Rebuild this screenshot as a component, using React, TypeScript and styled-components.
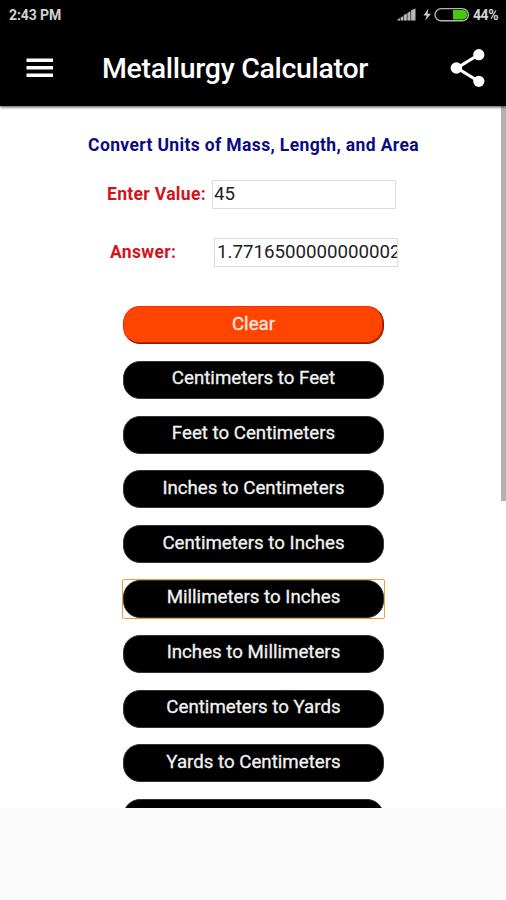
import React from 'react';
import styled, { createGlobalStyle, css } from 'styled-components';

const GlobalStyle = createGlobalStyle`
  * { box-sizing: border-box; }
  body { margin: 0; background: #fafafa; font-family: Roboto, "Liberation Sans", sans-serif; }
`;

const Screen = styled.div`
  width: 506px;
  height: 900px;
  display: flex;
  flex-direction: column;
  overflow: hidden;
  background: #fafafa;
`;

const Header = styled.header`
  height: 106px;
  flex: none;
  background: #000;
  color: #fff;
  box-shadow: 0 1px 3px rgba(0, 0, 0, 0.75);
  z-index: 1;
`;

const StatusBar = styled.div`
  height: 30px;
  padding: 0 8px 0 9px;
  display: flex;
  align-items: center;
  color: #d2d2d2;
  font-size: 14px;
  font-weight: 700;
`;

const Clock = styled.span`
  flex: 1;
  letter-spacing: -0.1px;
`;

const Percent = styled.span`
  font-size: 14px;
  letter-spacing: -0.5px;
`;

const StatusIcons = styled.svg`
  display: block;
  margin-right: 3px;
`;

const AppBar = styled.div`
  height: 76px;
  display: flex;
  align-items: center;
  padding: 0 20px 0 26px;
`;

const MenuIcon = styled.svg`
  display: block;
  flex: none;
  margin-right: 49px;
`;

const ShareIcon = styled.svg`
  display: block;
  flex: none;
`;

const Title = styled.h1`
  margin: 2px 0 0;
  flex: 1;
  font-size: 28.5px;
  font-weight: 500;
  line-height: 34px;
  letter-spacing: -0.3px;
  white-space: nowrap;
`;

const Content = styled.main`
  height: 702px;
  flex: none;
  display: flex;
  background: #fff;
  overflow: hidden;
`;

const Page = styled.div`
  flex: 1;
  display: flex;
  flex-direction: column;
  align-items: center;
  padding-left: 6px;
  min-width: 0;
`;

const ScrollThumb = styled.div`
  width: 5px;
  height: 395px;
  flex: none;
  background: #b2b2b2;
`;

const Heading = styled.h2`
  margin: 28px 0 0;
  font-size: 17.5px;
  line-height: 22px;
  font-weight: 700;
  letter-spacing: 0.36px;
  color: #0a0a82;
  white-space: nowrap;
`;

const Fields = styled.div`
  margin-top: 23px;
  width: 293px;
  display: flex;
  flex-direction: column;
  gap: 28px;
`;

const Field = styled.label<{ $inset: number }>`
  height: 30px;
  display: flex;
  align-items: center;
  padding-left: ${(p) => p.$inset}px;
`;

const FieldName = styled.span<{ $width: number }>`
  width: ${(p) => p.$width}px;
  flex: none;
  font-size: 17.5px;
  line-height: 22px;
  font-weight: 700;
  letter-spacing: 0.33px;
  color: #d3131b;
  white-space: nowrap;
`;

const Value = styled.input<{ $pad: number }>`
  width: 184px;
  height: 29px;
  flex: none;
  margin: 0;
  padding: 0 0 1px ${(p) => p.$pad}px;
  border: 1px solid #dcdcdc;
  border-radius: 0;
  outline: none;
  background: #fff;
  color: #222;
  font: 400 18.7px Roboto, "Liberation Sans", sans-serif;
`;

const Buttons = styled.div`
  margin-top: 39px;
  display: flex;
  flex-direction: column;
  gap: 16.8px;
`;

const Button = styled.button<{ $kind?: 'clear' }>`
  display: block;
  width: 261px;
  height: 38px;
  flex: none;
  margin: 0;
  padding: 0 0 3px;
  border: 1px solid #333;
  border-radius: 17px;
  background: #000;
  color: #f2f2f2;
  font: 400 18.7px/24px Roboto, "Liberation Sans", sans-serif;
  -webkit-text-stroke: 0.3px currentColor;
  white-space: nowrap;
  ${(p) =>
    p.$kind === 'clear' &&
    css`
      background: #ff4500;
      border-color: #f02d05 #9c1608 #9c1608 #f02d05;
      box-shadow: inset -1px -1px 0 #b92a04;
      color: #ffe6e0;
    `}
`;

const FocusRing = styled.div`
  width: 261px;
  height: 38px;
  border-radius: 1px;
  outline: 1.5px solid #e9a13b;
`;

const conversions = [
  'Centimeters to Feet',
  'Feet to Centimeters',
  'Inches to Centimeters',
  'Centimeters to Inches',
  'Millimeters to Inches',
  'Inches to Millimeters',
  'Centimeters to Yards',
  'Yards to Centimeters',
  '',
];

const focused = 'Millimeters to Inches';

export default function App() {
  return (
    <Screen>
      <GlobalStyle />
      <Header>
        <StatusBar>
          <Clock>2:43 PM</Clock>
          <StatusIcons width="73" height="16" viewBox="0 0 73 16">
            <path
              d="M0.5 13.5V12.5L3 11V13.5ZM3.6 13.5V10.5L6.3 9V13.5ZM6.9 13.5V8L9.8 6.5V13.5ZM10.4 13.5V6L13.5 4.2V13.5ZM14.1 13.5V3.2L18.5 1.5V13.5Z"
              fill="#b8b8b8"
            />
            <path d="M31.5 1.5L26.5 8.6H29.8L28 13.8L34 6.7H30.5Z" fill="#d0d0d0" />
            <rect x="38" y="1.6" width="33.4" height="12.2" rx="6.1" fill="#000" stroke="#b5b5b5" strokeWidth="1.4" />
            <path d="M56 3H65.5A4.7 4.7 0 0 1 65.5 12.4H56Z" fill="#45c90b" />
          </StatusIcons>
          <Percent>44%</Percent>
        </StatusBar>
        <AppBar>
          <MenuIcon width="27" height="20" viewBox="0 0 27 20">
            <path d="M0.5 0.5H27V4H0.5ZM0.5 8H27V11.5H0.5ZM0.5 15.5H27V19H0.5Z" fill="#fff" />
          </MenuIcon>
          <Title>Metallurgy Calculator</Title>
          <ShareIcon width="36" height="40" viewBox="0 0 36 40">
            <path d="M29 6.5L7 20L29 33.5" fill="none" stroke="#fff" strokeWidth="3.2" />
            <circle cx="28.8" cy="6.7" r="5.6" fill="#fff" />
            <circle cx="6.4" cy="20" r="5.8" fill="#fff" />
            <circle cx="28.8" cy="33.3" r="5.6" fill="#fff" />
          </ShareIcon>
        </AppBar>
      </Header>
      <Content>
        <Page>
          <Heading>Convert Units of Mass, Length, and Area</Heading>
          <Fields>
            <Field $inset={0}>
              <FieldName $width={105}>Enter Value:</FieldName>
              <Value $pad={1} readOnly value="45" />
            </Field>
            <Field $inset={3}>
              <FieldName $width={104}>Answer:</FieldName>
              <Value $pad={2} readOnly value="1.7716500000000002" />
            </Field>
          </Fields>
          <Buttons>
            <Button $kind="clear">Clear</Button>
            {conversions.map((name) =>
              name === focused ? (
                <FocusRing key={name}>
                  <Button>{name}</Button>
                </FocusRing>
              ) : (
                <Button key={name}>{name}</Button>
              ),
            )}
          </Buttons>
        </Page>
        <ScrollThumb />
      </Content>
    </Screen>
  );
}
